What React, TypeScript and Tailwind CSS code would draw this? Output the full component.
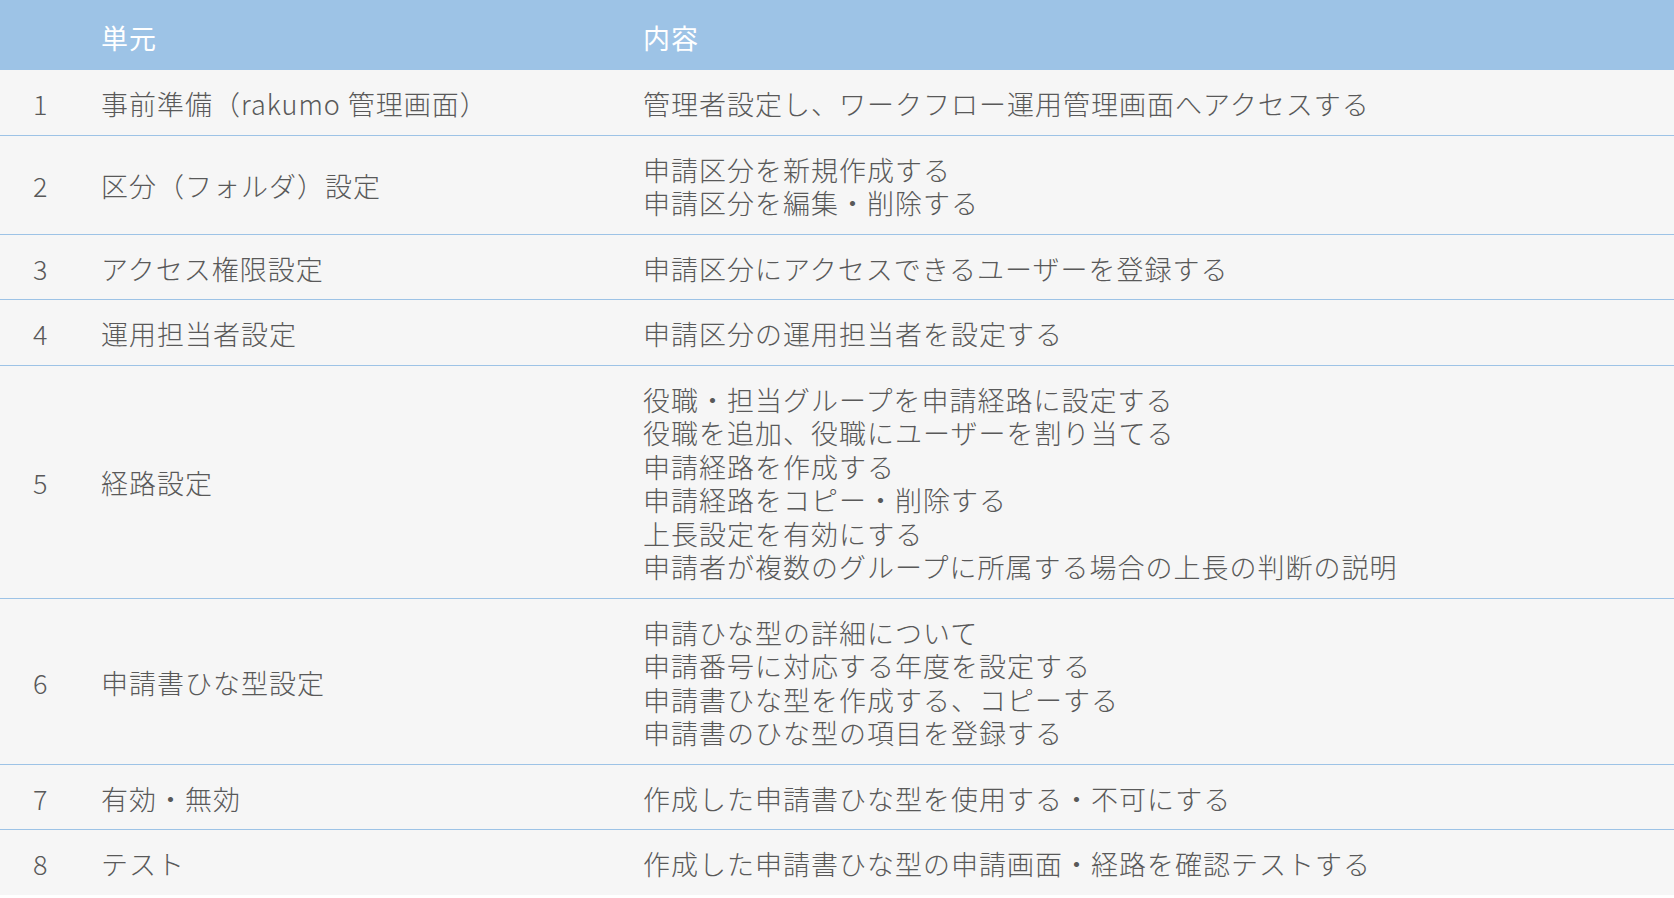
const rows: { no: string; unit: string; items: string[] }[] = [
  { no: '1', unit: '事前準備（rakumo 管理画面）', items: ['管理者設定し、ワークフロー運用管理画面へアクセスする'] },
  { no: '2', unit: '区分（フォルダ）設定', items: ['申請区分を新規作成する', '申請区分を編集・削除する'] },
  { no: '3', unit: 'アクセス権限設定', items: ['申請区分にアクセスできるユーザーを登録する'] },
  { no: '4', unit: '運用担当者設定', items: ['申請区分の運用担当者を設定する'] },
  {
    no: '5',
    unit: '経路設定',
    items: [
      '役職・担当グループを申請経路に設定する',
      '役職を追加、役職にユーザーを割り当てる',
      '申請経路を作成する',
      '申請経路をコピー・削除する',
      '上長設定を有効にする',
      '申請者が複数のグループに所属する場合の上長の判断の説明',
    ],
  },
  {
    no: '6',
    unit: '申請書ひな型設定',
    items: [
      '申請ひな型の詳細について',
      '申請番号に対応する年度を設定する',
      '申請書ひな型を作成する、コピーする',
      '申請書のひな型の項目を登録する',
    ],
  },
  { no: '7', unit: '有効・無効', items: ['作成した申請書ひな型を使用する・不可にする'] },
  { no: '8', unit: 'テスト', items: ['作成した申請書ひな型の申請画面・経路を確認テストする'] },
]

export default function App(): JSX.Element {
  return (
    <div
      className="min-h-screen bg-white text-[27px] leading-[33.5px] tracking-[1px] text-[#595959]"
      style={{ fontFamily: '"Noto Sans CJK JP", "Noto Sans", sans-serif' }}
    >
      {/* Header */}
      <div className="grid h-[70px] grid-cols-[101px_542px_1fr] items-center bg-[#9dc3e6] pt-[6px] text-white">
        <div />
        <div>単元</div>
        <div>内容</div>
      </div>

      {rows.map((r, i) => (
        <div
          key={r.no}
          className={
            'grid grid-cols-[101px_542px_1fr] items-center bg-[#f6f6f6] pt-[17px] pb-[14px] font-light ' +
            (i < rows.length - 1 ? 'border-b border-[#9dc3e6]' : '')
          }
        >
          <div className="pl-[33px]">{r.no}</div>
          <div>{r.unit}</div>
          <div>
            {r.items.map((t) => (
              <div key={t}>{t}</div>
            ))}
          </div>
        </div>
      ))}
    </div>
  )
}
